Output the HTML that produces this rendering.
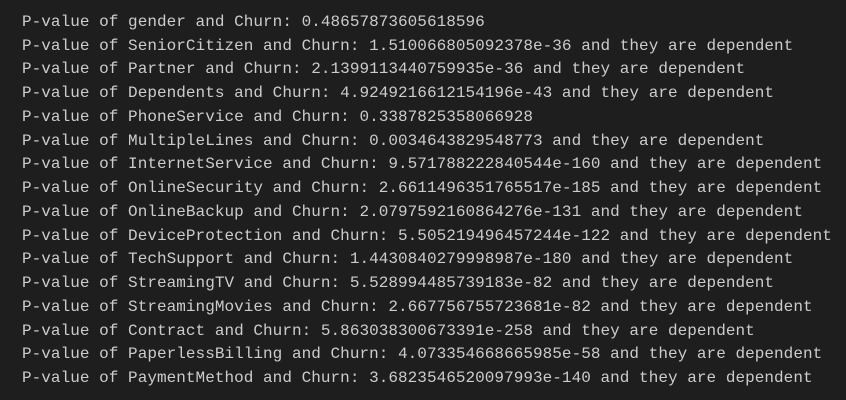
<!DOCTYPE html>
<html><head><meta charset="utf-8"><style>
html,body{margin:0;padding:0;background:#1e1e1e;width:846px;height:400px;overflow:hidden}
pre{margin:0;padding:11px 0 0 22px;font-family:"Liberation Mono",monospace;font-size:16px;letter-spacing:0.04px;line-height:23.73px;color:#cccccc;white-space:pre}
</style></head><body><pre>P-value of gender and Churn: 0.48657873605618596
P-value of SeniorCitizen and Churn: 1.510066805092378e-36 and they are dependent
P-value of Partner and Churn: 2.1399113440759935e-36 and they are dependent
P-value of Dependents and Churn: 4.9249216612154196e-43 and they are dependent
P-value of PhoneService and Churn: 0.3387825358066928
P-value of MultipleLines and Churn: 0.0034643829548773 and they are dependent
P-value of InternetService and Churn: 9.571788222840544e-160 and they are dependent
P-value of OnlineSecurity and Churn: 2.6611496351765517e-185 and they are dependent
P-value of OnlineBackup and Churn: 2.0797592160864276e-131 and they are dependent
P-value of DeviceProtection and Churn: 5.505219496457244e-122 and they are dependent
P-value of TechSupport and Churn: 1.4430840279998987e-180 and they are dependent
P-value of StreamingTV and Churn: 5.528994485739183e-82 and they are dependent
P-value of StreamingMovies and Churn: 2.667756755723681e-82 and they are dependent
P-value of Contract and Churn: 5.863038300673391e-258 and they are dependent
P-value of PaperlessBilling and Churn: 4.073354668665985e-58 and they are dependent
P-value of PaymentMethod and Churn: 3.6823546520097993e-140 and they are dependent</pre></body></html>
